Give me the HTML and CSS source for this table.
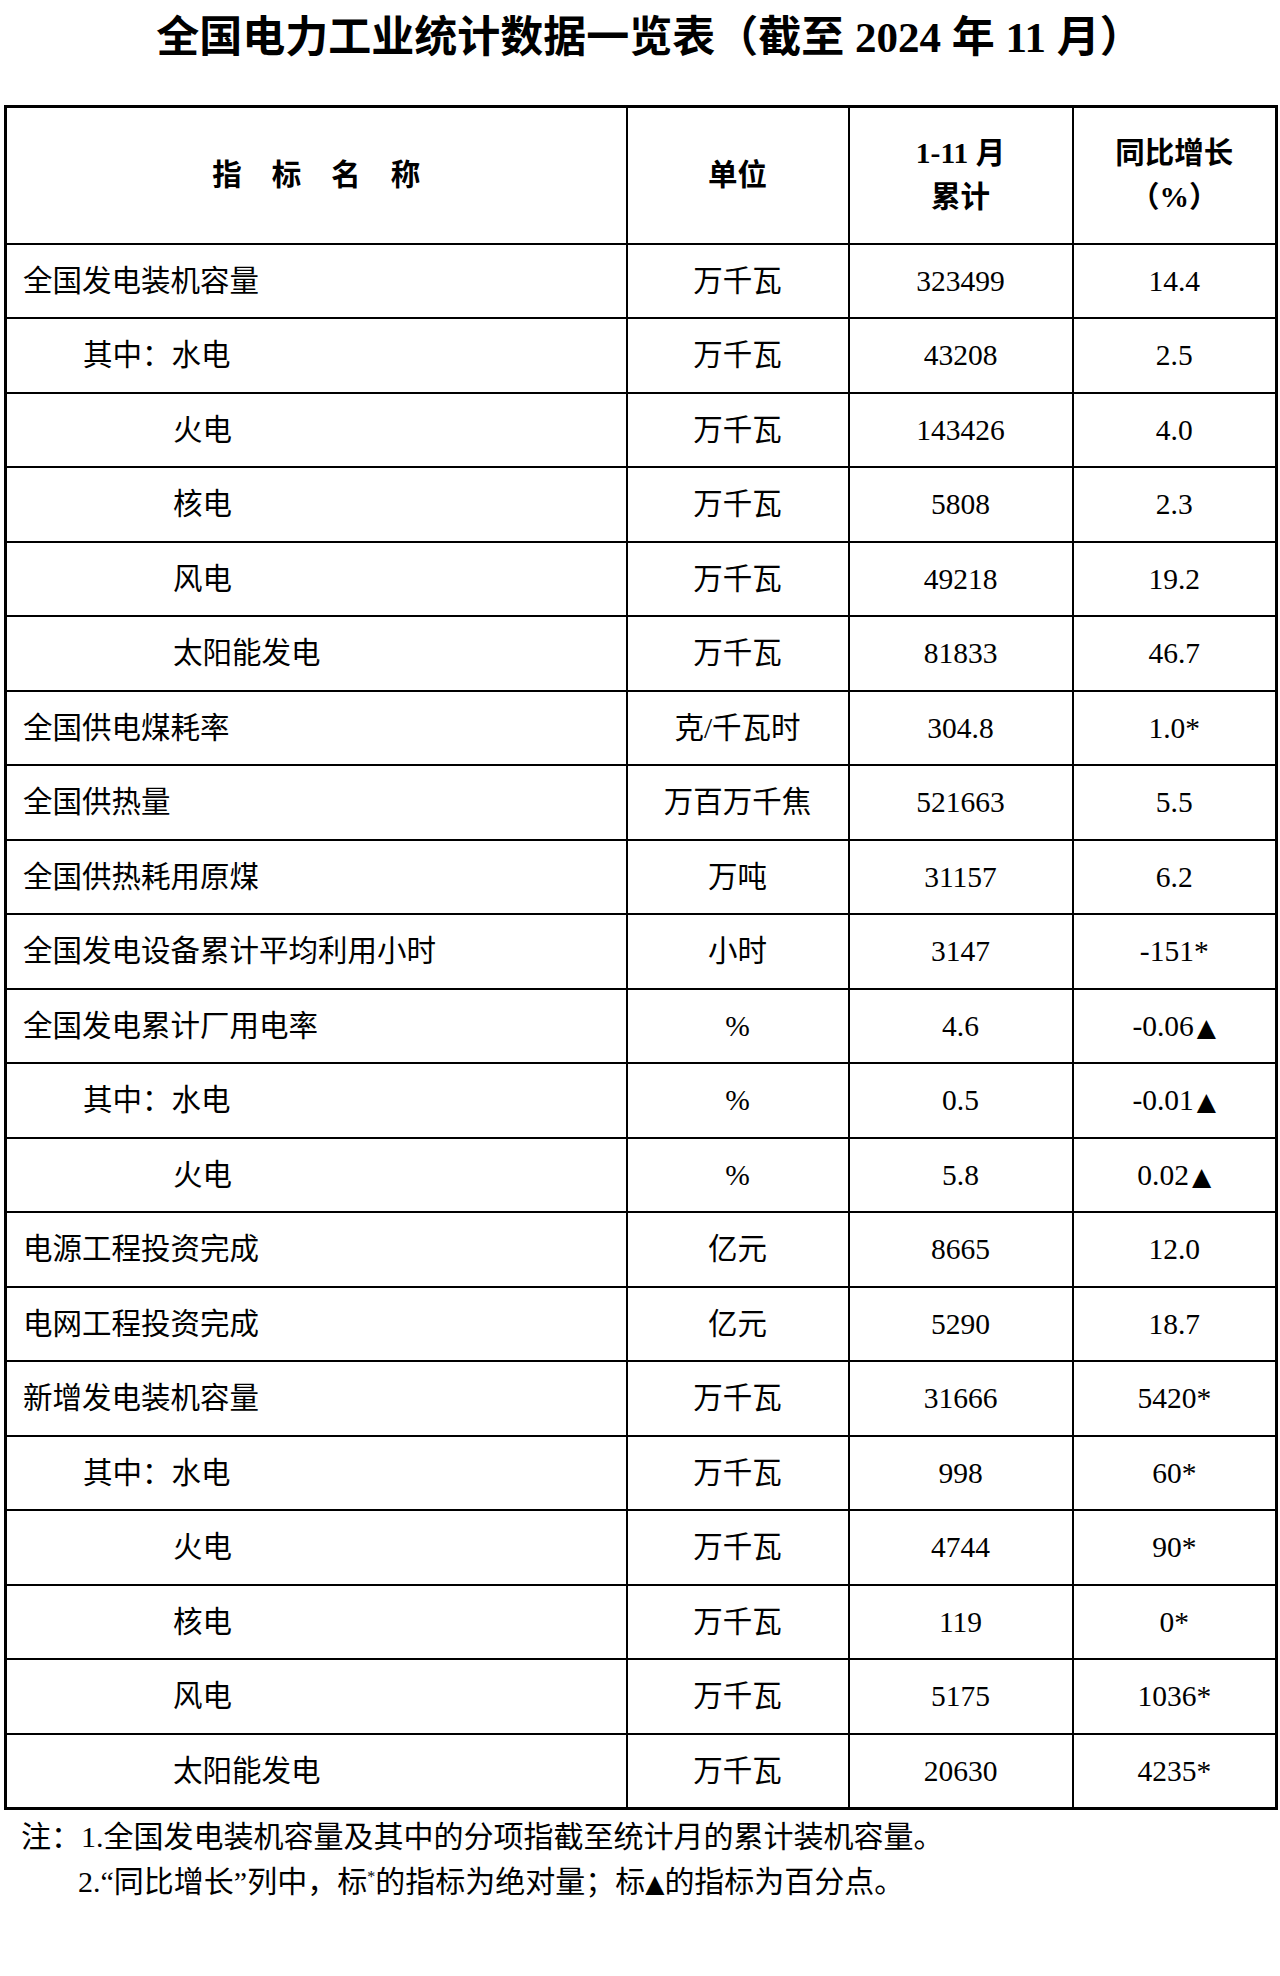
FILE: index.html
```html
<!DOCTYPE html>
<html lang="zh-CN">
<head>
<meta charset="utf-8">
<title>全国电力工业统计数据一览表</title>
<link rel="stylesheet" href="styles.css">
</head>
<body>
<div class="page">
  <h1 class="title">全国电力工业统计数据一览表（截至 2024 年 11 月）</h1>
  <table class="stats">
    <colgroup>
      <col class="c-name">
      <col class="c-unit">
      <col class="c-total">
      <col class="c-growth">
    </colgroup>
    <thead>
      <tr>
        <th><span class="spaced">指标名称</span></th>
        <th>单位</th>
        <th>1-11 月<br>累计</th>
        <th>同比增长<br>（%）</th>
      </tr>
    </thead>
    <tbody>
      <tr><td class="lv0">全国发电装机容量</td><td>万千瓦</td><td>323499</td><td>14.4</td></tr>
      <tr><td class="lv1">其中：水电</td><td>万千瓦</td><td>43208</td><td>2.5</td></tr>
      <tr><td class="lv2">火电</td><td>万千瓦</td><td>143426</td><td>4.0</td></tr>
      <tr><td class="lv2">核电</td><td>万千瓦</td><td>5808</td><td>2.3</td></tr>
      <tr><td class="lv2">风电</td><td>万千瓦</td><td>49218</td><td>19.2</td></tr>
      <tr><td class="lv2">太阳能发电</td><td>万千瓦</td><td>81833</td><td>46.7</td></tr>
      <tr><td class="lv0">全国供电煤耗率</td><td>克/千瓦时</td><td>304.8</td><td>1.0*</td></tr>
      <tr><td class="lv0">全国供热量</td><td>万百万千焦</td><td>521663</td><td>5.5</td></tr>
      <tr><td class="lv0">全国供热耗用原煤</td><td>万吨</td><td>31157</td><td>6.2</td></tr>
      <tr><td class="lv0">全国发电设备累计平均利用小时</td><td>小时</td><td>3147</td><td>-151*</td></tr>
      <tr><td class="lv0">全国发电累计厂用电率</td><td>%</td><td>4.6</td><td>-0.06<span class="tri">▲</span></td></tr>
      <tr><td class="lv1">其中：水电</td><td>%</td><td>0.5</td><td>-0.01<span class="tri">▲</span></td></tr>
      <tr><td class="lv2">火电</td><td>%</td><td>5.8</td><td>0.02<span class="tri">▲</span></td></tr>
      <tr><td class="lv0">电源工程投资完成</td><td>亿元</td><td>8665</td><td>12.0</td></tr>
      <tr><td class="lv0">电网工程投资完成</td><td>亿元</td><td>5290</td><td>18.7</td></tr>
      <tr><td class="lv0">新增发电装机容量</td><td>万千瓦</td><td>31666</td><td>5420*</td></tr>
      <tr><td class="lv1">其中：水电</td><td>万千瓦</td><td>998</td><td>60*</td></tr>
      <tr><td class="lv2">火电</td><td>万千瓦</td><td>4744</td><td>90*</td></tr>
      <tr><td class="lv2">核电</td><td>万千瓦</td><td>119</td><td>0*</td></tr>
      <tr><td class="lv2">风电</td><td>万千瓦</td><td>5175</td><td>1036*</td></tr>
      <tr><td class="lv2">太阳能发电</td><td>万千瓦</td><td>20630</td><td>4235*</td></tr>
    </tbody>
  </table>
  <div class="notes">
    <p class="note-first">注：1.全国发电装机容量及其中的分项指截至统计月的累计装机容量。</p>
    <p class="note-next">2.“同比增长”列中，标<sup class="star">*</sup>的指标为绝对量；标<span class="tri">▲</span>的指标为百分点。</p>
  </div>
</div>
</body>
</html>
```

FILE: styles.css
```css
html, body {
  margin: 0;
  padding: 0;
  background: #ffffff;
  color: #000000;
  font-family: "Liberation Serif", "Noto Sans CJK SC", serif;
}

.page {
  width: 1280px;
  padding: 0 5px 0 4px;
  box-sizing: border-box;
}

.title {
  margin: 14px 0 43px;
  padding-left: 20px;
  font-size: 43px;
  line-height: 48px;
  font-weight: 700;
  text-align: center;
  letter-spacing: 0;
}

.stats {
  width: 1271px;
  border-collapse: collapse;
  table-layout: fixed;
  border: 3px solid #000;
  font-size: 29.5px;
}

.c-name { width: 621px; }
.c-unit { width: 222px; }
.c-total { width: 224px; }
.c-growth { width: 204px; }

.stats th,
.stats td {
  border: 2px solid #000;
  padding: 0;
  text-align: center;
  vertical-align: middle;
  white-space: nowrap;
}

.stats thead tr {
  height: 137px;
}

.stats th {
  font-weight: 700;
  line-height: 44px;
}

.spaced {
  display: inline-block;
  letter-spacing: 30px;
  margin-right: -30px;
}

.stats tbody tr {
  height: 74.5px;
}

.stats td {
  line-height: 36px;
}

.stats td.lv0 { text-align: left; padding-left: 16px; }
.stats td.lv1 { text-align: left; padding-left: 76px; }
.stats td.lv2 { text-align: left; padding-left: 166px; }

.tri {
  font-family: "DejaVu Sans", sans-serif;
  font-size: 25px;
  line-height: 1;
  margin-left: 3px;
}

.notes {
  padding-top: 4px;
  font-size: 30px;
  line-height: 45px;
}

.notes p {
  margin: 0;
}

.note-first {
  padding-left: 17px;
}

.note-next {
  padding-left: 74px;
}

.notes .tri {
  margin-left: 0;
}

.star {
  font-size: 16px;
  line-height: 0;
  vertical-align: 10px;
}
```
